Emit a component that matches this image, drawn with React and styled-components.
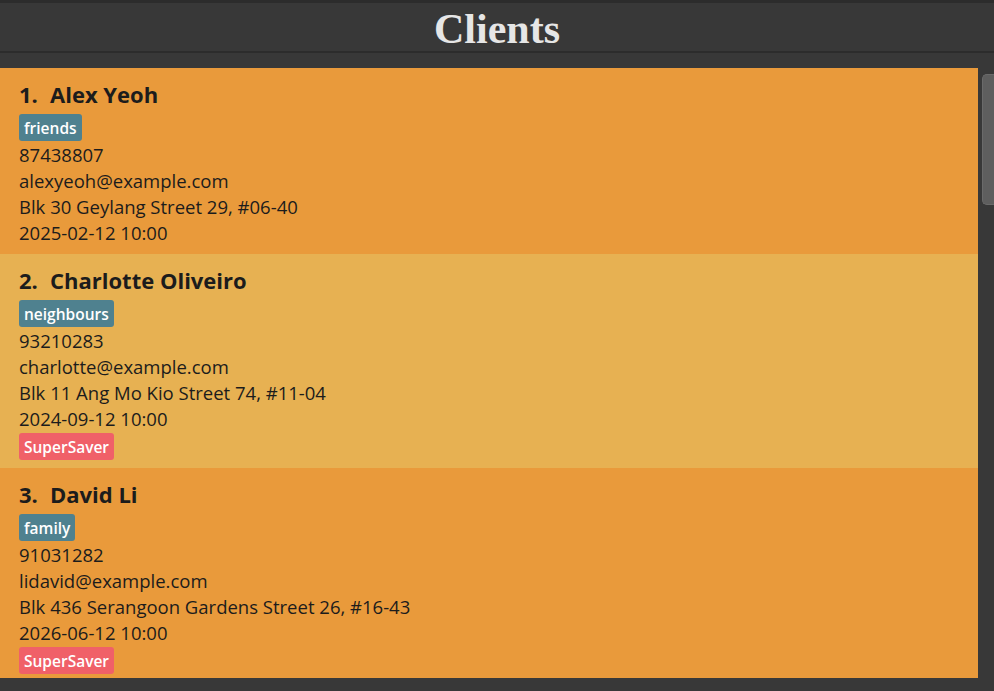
import styled, { createGlobalStyle } from 'styled-components';

const GlobalStyle = createGlobalStyle`
  html, body {
    margin: 0;
    padding: 0;
    background-color: #383838;
    height: 100%;
    overflow: hidden;
  }
`;

const Page = styled.div`
  width: 994px;
  height: 691px;
  background-color: #383838;
  display: flex;
  flex-direction: column;
`;

const Header = styled.div`
  border-top: 3px solid #2c2c2c;
  border-bottom: 2px solid #2c2c2c;
  height: 48px;
  display: flex;
  align-items: center;
  justify-content: center;
`;

const Title = styled.h1`
  margin: 0;
  padding-top: 4px;
  font-family: 'Liberation Serif', 'Times New Roman', serif;
  font-weight: bold;
  font-size: 42px;
  color: #e6e6e6;
  line-height: 1;
`;

const Body = styled.div`
  display: flex;
  margin-top: 15px;
  height: 610px;
`;

const List = styled.div`
  width: 978px;
  overflow: hidden;
`;

const Card = styled.div`
  background-color: ${(p) => (p.$odd ? '#e7b152' : '#e99a3b')};
  padding: 12px 0 8px 19px;
  font-family: 'Open Sans', 'Noto Sans', sans-serif;
  color: #1c1c1c;
`;

const NameRow = styled.div`
  display: flex;
  align-items: center;
  box-sizing: border-box;
  height: 30px;
  padding-bottom: 3px;
  font-size: 22px;
  font-weight: 700;
  margin-bottom: 4px;
`;

const Index = styled.span`
  width: 31px;
`;

const Tags = styled.div`
  display: flex;
  gap: 4px;
  margin-bottom: 1px;
`;

const Tag = styled.span`
  display: inline-flex;
  align-items: center;
  box-sizing: border-box;
  height: 27px;
  padding: 0 5px;
  border-radius: 3px;
  background-color: ${(p) => (p.$red ? '#f06068' : '#4f818f')};
  color: #ffffff;
  font-size: 15.5px;
  font-weight: 600;
`;

const Line = styled.div`
  height: 26px;
  line-height: 26px;
  font-size: 18.5px;
`;

const Promo = styled(Tags)`
  margin: 1px 0 0;
`;

const Track = styled.div`
  flex: 1;
  padding: 6px 0 0 4px;
`;

const Thumb = styled.div`
  height: 129px;
  background-color: #5e5e5e;
  border: 1px solid #6a6a6a;
  border-right: none;
  border-radius: 5px 0 0 5px;
`;

const clients = [
  {
    name: 'Alex Yeoh',
    tags: ['friends'],
    phone: '87438807',
    email: 'alexyeoh@example.com',
    address: 'Blk 30 Geylang Street 29, #06-40',
    date: '2025-02-12 10:00',
  },
  {
    name: 'Charlotte Oliveiro',
    tags: ['neighbours'],
    phone: '93210283',
    email: 'charlotte@example.com',
    address: 'Blk 11 Ang Mo Kio Street 74, #11-04',
    date: '2024-09-12 10:00',
    promo: 'SuperSaver',
  },
  {
    name: 'David Li',
    tags: ['family'],
    phone: '91031282',
    email: 'lidavid@example.com',
    address: 'Blk 436 Serangoon Gardens Street 26, #16-43',
    date: '2026-06-12 10:00',
    promo: 'SuperSaver',
  },
];

const App = () => {
  return (
    <Page>
      <GlobalStyle />
      <Header>
        <Title>Clients</Title>
      </Header>
      <Body>
        <List>
          {clients.map((c, i) => (
            <Card key={c.name} $odd={i % 2 === 1}>
              <NameRow>
                <Index>{i + 1}.</Index>
                {c.name}
              </NameRow>
              <Tags>
                {c.tags.map((t) => (
                  <Tag key={t}>{t}</Tag>
                ))}
              </Tags>
              <Line>{c.phone}</Line>
              <Line>{c.email}</Line>
              <Line>{c.address}</Line>
              <Line>{c.date}</Line>
              {c.promo && (
                <Promo>
                  <Tag $red>{c.promo}</Tag>
                </Promo>
              )}
            </Card>
          ))}
        </List>
        <Track>
          <Thumb />
        </Track>
      </Body>
    </Page>
  );
};

export default App;
